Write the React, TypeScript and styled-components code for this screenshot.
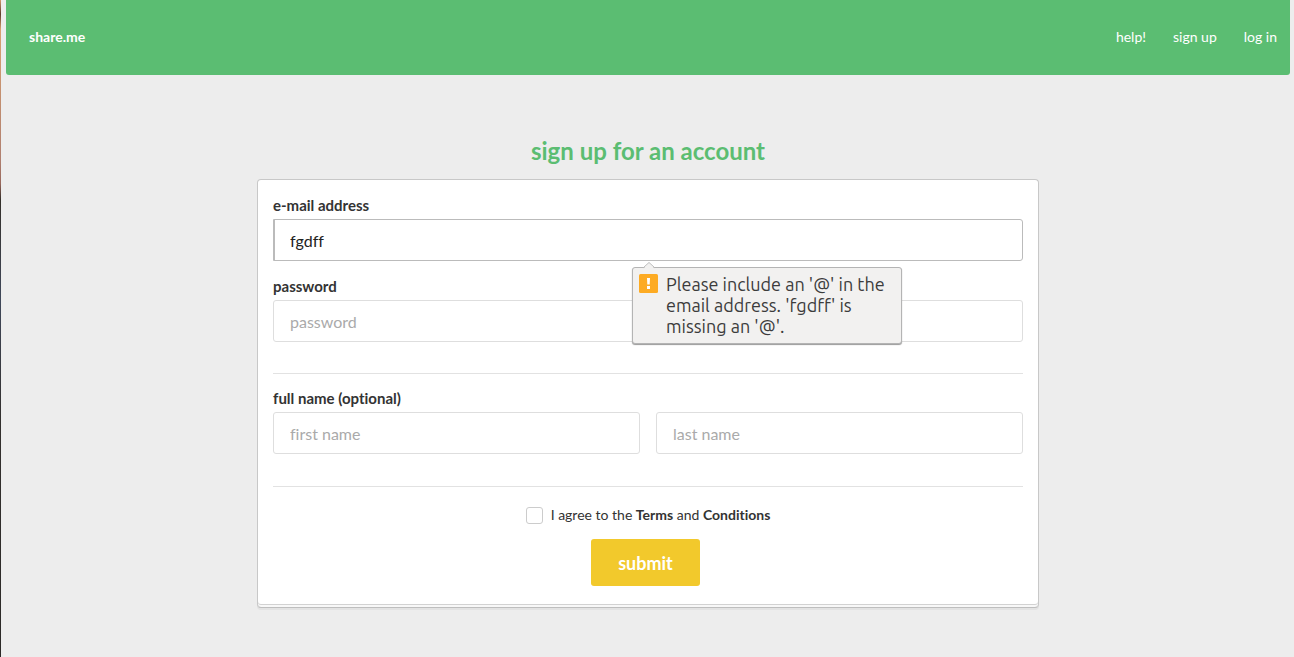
import React from 'react';
import styled, { createGlobalStyle } from 'styled-components';

const GlobalStyle = createGlobalStyle`
  *, *::before, *::after { box-sizing: border-box; }
  body {
    margin: 0;
    background: #ededed;
    color: #333;
    font-family: Lato, "Liberation Sans", sans-serif;
    font-size: 14px;
    font-variant-ligatures: none;
    line-height: 20px;
  }
`;

const Page = styled.div`
  min-height: 100vh;
  padding: 0 4px 0 5px;
  border-left: 1px solid;
  border-image: linear-gradient(
    #d8a070 0, #5c3c2c 15px, #d8a070 30px, #b08070 160px,
    #98685c 184px, #34302a 200px, #40485a 300px, #33302e 420px, #2c2a28 100%
  ) 1;
`;

const NavBar = styled.nav`
  display: flex;
  align-items: center;
  justify-content: space-between;
  height: 75px;
  padding: 0 13px 2px 23px;
  border-radius: 0 0 3px 3px;
  background: #5bbd72;
`;

const NavLinks = styled.div`
  display: flex;
  gap: 27px;
`;

const NavLink = styled.a<{ $bold?: boolean }>`
  color: #fff;
  font-weight: ${(p) => (p.$bold ? 700 : 400)};
  text-decoration: none;
`;

const Main = styled.main`
  max-width: 782px;
  margin: 0 auto;
  padding-top: 60px;
`;

const Title = styled.h1`
  margin: 0 0 12px;
  color: #5bbd72;
  font-size: 24px;
  font-weight: 700;
  line-height: 32px;
  text-align: center;
`;

const Card = styled.form`
  display: flex;
  flex-direction: column;
  padding: 15px 15px 21px;
  border: 1px solid #c8c8c8;
  border-bottom-color: #bebebe;
  border-radius: 4px;
  background: #fff;
  box-shadow: inset 0 -2px 0 #f8f8f8, inset 0 -3px 0 #d2d2d2, 0 2px 0 #e3e3e3;
`;

const Field = styled.div`
  position: relative;
  margin-bottom: 15px;
`;

const Label = styled.label`
  display: block;
  margin-bottom: 4px;
  font-size: 15px;
  font-weight: 700;
`;

const TextInput = styled.input<{ $active?: boolean }>`
  display: block;
  width: 100%;
  min-width: 0;
  height: 42px;
  padding: 0 16px;
  border: 1px solid ${(p) => (p.$active ? '#bbb' : '#dedede')};
  border-radius: ${(p) => (p.$active ? '0 3px 3px 0' : '3px')};
  outline: none;
  background: #fff;
  box-shadow: ${(p) => (p.$active ? 'inset 1px 0 0 #bbb' : 'none')};
  color: #222;
  font-family: inherit;
  font-size: 16px;
  font-variant-ligatures: none;

  &::placeholder { color: #aaa; opacity: 1; }
`;

const NameGroup = styled.fieldset`
  min-width: 0;
  margin: 0 0 16px;
  padding: 0;
  border: 0;
`;

const Legend = styled.legend`
  margin-bottom: 4px;
  padding: 0;
  font-size: 15px;
  font-weight: 700;
`;

const NameRow = styled.div`
  display: grid;
  grid-template-columns: 1fr 1fr;
  gap: 16px;
`;

const Divider = styled.hr`
  width: 100%;
  height: 1px;
  margin: 16px 0 14px;
  border: 0;
  background: #e2e2e2;
`;

const Agreement = styled.label`
  display: flex;
  align-items: center;
  justify-content: center;
  gap: 8px;
  margin-top: 4px;
`;

const CheckBox = styled.input`
  appearance: none;
  width: 17px;
  height: 17px;
  margin: 0;
  border: 1px solid #ccc;
  border-radius: 3px;
  background: #fff;
`;

const Actions = styled.div`
  display: flex;
  justify-content: center;
  margin-top: 14px;
  padding-right: 5px;
`;

const SubmitButton = styled.button`
  height: 47px;
  padding: 0 27px;
  border: 0;
  border-radius: 3px;
  background: #f2c92c;
  color: #fff;
  font-family: inherit;
  font-size: 18px;
  font-weight: 700;
`;

const Bubble = styled.div`
  position: absolute;
  z-index: 1;
  top: calc(100% + 6px);
  left: calc(50% - 16px);
  display: flex;
  gap: 8px;
  width: 270px;
  padding: 6px;
  border: 1px solid #b4b4b4;
  border-radius: 3px;
  background: #f2f1f0;
  box-shadow: 0 1px 1px rgba(0, 0, 0, 0.4);
  color: #3c3c3c;
  font-family: Ubuntu, "Noto Sans", sans-serif;
  font-size: 18px;
  line-height: 21px;
`;

const BubbleText = styled.span`
  white-space: nowrap;
`;

const BubbleArrow = styled.svg`
  position: absolute;
  top: -6px;
  left: 9px;
`;

const WarningIcon = styled.svg`
  flex: none;
`;

export default function App() {
  return (
    <>
      <GlobalStyle />
      <Page>
        <NavBar>
          <NavLink href="#home" $bold>share.me</NavLink>
          <NavLinks>
            <NavLink href="#help">help!</NavLink>
            <NavLink href="#signup">sign up</NavLink>
            <NavLink href="#login">log in</NavLink>
          </NavLinks>
        </NavBar>
        <Main>
          <Title>sign up for an account</Title>
          <Card noValidate onSubmit={(e) => e.preventDefault()}>
            <Field>
              <Label htmlFor="email">e-mail address</Label>
              <TextInput id="email" type="email" defaultValue="fgdff" aria-describedby="email-error" $active />
              <Bubble id="email-error" role="alert">
                <BubbleArrow width="14" height="7" viewBox="0 0 14 7" aria-hidden="true">
                  <path d="M1 7 L7 1 L13 7 Z" fill="#f2f1f0" />
                  <path d="M1 6 L7 0.5 L13 6" fill="none" stroke="#b8b8b8" />
                </BubbleArrow>
                <WarningIcon width="19" height="19" viewBox="0 0 19 19" aria-hidden="true">
                  <rect width="19" height="19" rx="1.5" fill="#fdab23" />
                  <path d="M8 4 H11 L10.7 10.5 H8.3 Z M8 12 H11 V15 H8 Z" fill="#fff" />
                </WarningIcon>
                <BubbleText>
                  Please include an '@' in the<br />
                  email address. 'fgdff' is<br />
                  missing an '@'.
                </BubbleText>
              </Bubble>
            </Field>
            <Field>
              <Label htmlFor="password">password</Label>
              <TextInput id="password" type="password" placeholder="password" />
            </Field>
            <Divider />
            <NameGroup>
              <Legend>full name (optional)</Legend>
              <NameRow>
                <TextInput aria-label="first name" placeholder="first name" />
                <TextInput aria-label="last name" placeholder="last name" />
              </NameRow>
            </NameGroup>
            <Divider />
            <Agreement>
              <CheckBox type="checkbox" />
              <span>I agree to the <b>Terms</b> and <b>Conditions</b></span>
            </Agreement>
            <Actions>
              <SubmitButton type="submit">submit</SubmitButton>
            </Actions>
          </Card>
        </Main>
      </Page>
    </>
  );
}
